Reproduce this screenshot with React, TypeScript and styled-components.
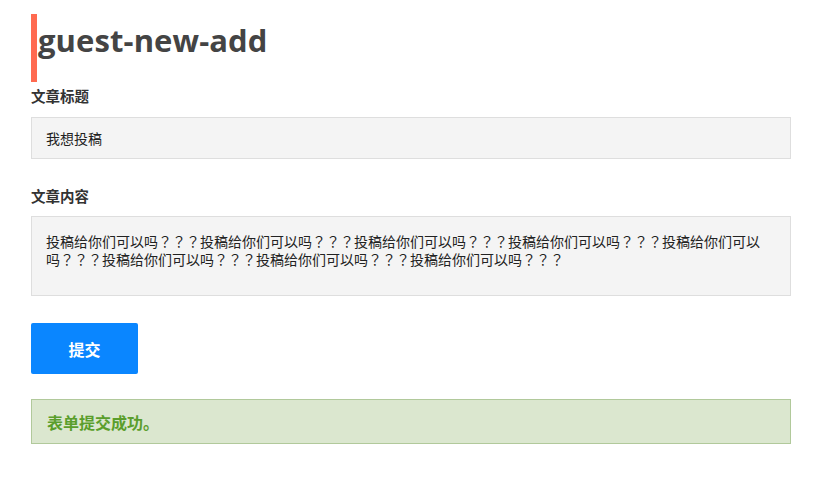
import React from "react";
import styled, { createGlobalStyle } from "styled-components";

const Global = createGlobalStyle`
  html, body { margin: 0; padding: 0; background: #fff; }
  body { font-family: "Open Sans", "Noto Sans CJK SC", sans-serif; color: #333; }
  * { box-sizing: border-box; }
`;

const Page = styled.div`
  width: 760px;
  margin-left: 31px;
  padding-top: 14px;
  display: flex;
  flex-direction: column;
`;

const Title = styled.h1`
  margin: 0;
  height: 68px;
  border-left: 6px solid #ff6a50;
  padding: 6px 0 0 1px;
  font-family: "Open Sans", "Noto Sans CJK SC", sans-serif;
  font-weight: 700;
  font-size: 31px;
  line-height: 40px;
  color: #444;
  letter-spacing: 0.1px;
`;

const Label = styled.label<{ $top: number }>`
  display: block;
  margin-top: ${(p) => p.$top}px;
  font-family: "Noto Sans CJK SC", sans-serif;
  font-weight: 700;
  font-size: 14.5px;
  line-height: 20px;
  color: #333;
`;

const Field = styled.div<{ $h: number; $gap: number }>`
  margin-top: ${(p) => p.$gap}px;
  height: ${(p) => p.$h}px;
  background: #f4f4f4;
  border: 1px solid #dedede;
  font-family: "Noto Sans CJK SC", sans-serif;
  font-size: 14px;
  color: #222;
`;

const Input = styled(Field)`
  display: flex;
  align-items: center;
  padding: 0 14px;
`;

const TextArea = styled(Field)`
  padding: 15px 16px 0 14px;
  line-height: 18px;
  white-space: pre-wrap;
  line-break: strict;
  font-family: "Noto Sans CJK TC", "Noto Sans CJK SC", sans-serif;
`;

const Button = styled.button`
  margin-top: 27px;
  width: 107px;
  height: 51px;
  border: none;
  border-radius: 2px;
  background: #0a86ff;
  color: #fff;
  font-family: "Noto Sans CJK SC", sans-serif;
  font-weight: 700;
  font-size: 16px;
  cursor: pointer;
`;

const Alert = styled.div`
  margin-top: 25px;
  height: 45px;
  display: flex;
  align-items: center;
  padding: 0 15px;
  background: #dbe7cf;
  border: 1px solid #b1c99b;
  color: #5a9e2c;
  font-family: "Noto Sans CJK SC", sans-serif;
  font-weight: 700;
  font-size: 16px;
`;

const content = "投稿给你们可以吗？？？".repeat(8);

export default function App() {
  return (
    <>
      <Global />
      <Page>
        <Title>guest-new-add</Title>
        <Label $top={4}>文章标题</Label>
        <Input $h={42} $gap={11}>我想投稿</Input>
        <Label $top={27}>文章内容</Label>
        <TextArea $h={80} $gap={10}>{content}</TextArea>
        <Button>提交</Button>
        <Alert>表单提交成功。</Alert>
      </Page>
    </>
  );
}
